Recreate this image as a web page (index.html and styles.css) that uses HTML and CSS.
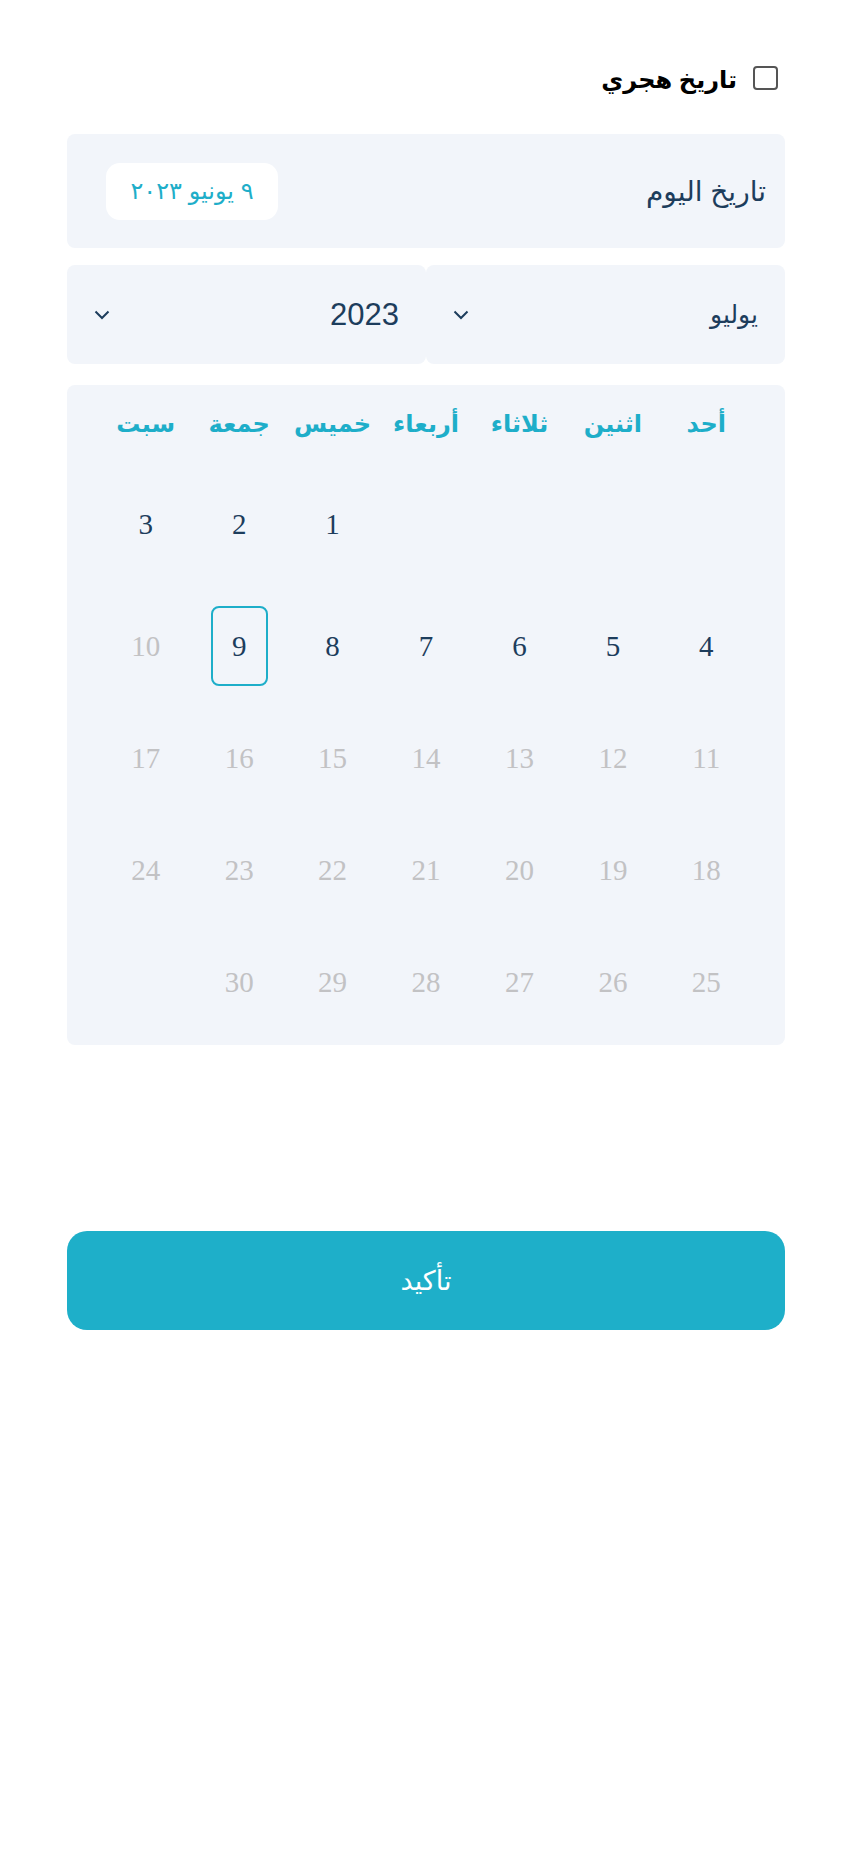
FILE: index.html
```html
<!DOCTYPE html>
<html lang="ar" dir="rtl">
<head>
<meta charset="utf-8">
<title>اختيار التاريخ</title>
<link rel="stylesheet" href="styles.css">
</head>
<body>
<div class="page">
  <label class="hijri">
    <span class="check"></span>
    <span class="hijri-text">تاريخ هجري</span>
  </label>

  <div class="today">
    <span class="today-title">تاريخ اليوم</span>
    <span class="today-chip">٩ يونيو ٢٠٢٣</span>
  </div>

  <div class="selects">
    <div class="select">
      <span class="select-text">يوليو</span>
      <svg class="chev" width="16" height="10" viewBox="0 0 16 10"><path d="M1.5 1.5 L8 8 L14.5 1.5" fill="none" stroke="#1d3d5c" stroke-width="2"/></svg>
    </div>
    <div class="select">
      <span class="select-text year">2023</span>
      <svg class="chev" width="16" height="10" viewBox="0 0 16 10"><path d="M1.5 1.5 L8 8 L14.5 1.5" fill="none" stroke="#1d3d5c" stroke-width="2"/></svg>
    </div>
  </div>

  <div class="calendar">
    <div class="weekdays">
      <span>أحد</span><span>اثنين</span><span>ثلاثاء</span><span>أربعاء</span><span>خميس</span><span>جمعة</span><span>سبت</span>
    </div>
    <div class="days">
      <div class="day"></div><div class="day"></div><div class="day"></div><div class="day"></div>
      <div class="day"><span>1</span></div><div class="day"><span>2</span></div><div class="day"><span>3</span></div>
      <div class="day"><span>4</span></div><div class="day"><span>5</span></div><div class="day"><span>6</span></div><div class="day"><span>7</span></div><div class="day"><span>8</span></div><div class="day"><span class="selected">9</span></div><div class="day muted"><span>10</span></div>
      <div class="day muted"><span>11</span></div><div class="day muted"><span>12</span></div><div class="day muted"><span>13</span></div><div class="day muted"><span>14</span></div><div class="day muted"><span>15</span></div><div class="day muted"><span>16</span></div><div class="day muted"><span>17</span></div>
      <div class="day muted"><span>18</span></div><div class="day muted"><span>19</span></div><div class="day muted"><span>20</span></div><div class="day muted"><span>21</span></div><div class="day muted"><span>22</span></div><div class="day muted"><span>23</span></div><div class="day muted"><span>24</span></div>
      <div class="day muted"><span>25</span></div><div class="day muted"><span>26</span></div><div class="day muted"><span>27</span></div><div class="day muted"><span>28</span></div><div class="day muted"><span>29</span></div><div class="day muted"><span>30</span></div><div class="day"></div>
    </div>
  </div>

  <button class="confirm">تأكيد</button>
</div>
</body>
</html>
```
FILE: styles.css
```css
* { box-sizing: border-box; }
html, body { margin: 0; padding: 0; background: #ffffff; }
body { font-family: "Liberation Sans", "DejaVu Sans", sans-serif; color: #1d3d5c; }

.page {
  direction: rtl;
  padding: 66px 67px 0 67px;
}

.hijri {
  display: flex;
  align-items: center;
  gap: 16px;
  height: 24px;
  padding-right: 7px;
}
.check {
  width: 25px;
  height: 24px;
  border: 2px solid #555555;
  border-radius: 4px;
  background: #fff;
}
.hijri-text {
  font-size: 24px;
  font-weight: bold;
  color: #000;
  line-height: 24px;
  margin-top: 4px;
}

.today {
  margin-top: 44px;
  height: 114px;
  background: #f2f5fa;
  border-radius: 8px;
  display: flex;
  align-items: center;
  justify-content: space-between;
  padding: 0 19px 0 39px;
}
.today-title {
  font-size: 28px;
  color: #1d3d5c;
}
.today-chip {
  width: 172px;
  height: 57px;
  background: #ffffff;
  border-radius: 14px;
  display: flex;
  align-items: center;
  justify-content: center;
  color: #1eaec9;
  font-size: 24px;
}

.selects {
  margin-top: 17px;
  display: flex;
  height: 99px;
}
.select {
  flex: 1;
  background: #f2f5fa;
  border-radius: 8px;
  display: flex;
  align-items: center;
  justify-content: space-between;
  padding: 0 27px;
}
.select-text {
  font-size: 25px;
  color: #1d3d5c;
}
.select-text.year {
  font-size: 31px;
}
.chev { display: block; }

.calendar {
  margin-top: 21px;
  background: #f2f5fa;
  border-radius: 8px;
  padding: 15px 32px 7px;
}
.weekdays {
  display: grid;
  grid-template-columns: repeat(7, 1fr);
  height: 48px;
  align-items: center;
  text-align: center;
  color: #1eaec9;
  font-weight: bold;
  font-size: 24px;
}
.days {
  margin-top: 20px;
  display: grid;
  grid-template-columns: repeat(7, 1fr);
  grid-template-rows: 112px 122px 112px 112px 112px;
  align-items: end;
  font-family: "Liberation Serif", "DejaVu Serif", serif;
  font-size: 29px;
  color: #1d3d5c;
}
.day {
  height: 112px;
  display: flex;
  align-items: center;
  justify-content: center;
}
.day.muted { color: #c2c2c4; }
.day .selected {
  width: 57px;
  height: 80px;
  border: 2px solid #1eaec9;
  border-radius: 8px;
  display: flex;
  align-items: center;
  justify-content: center;
}

.confirm {
  display: flex;
  align-items: center;
  justify-content: center;
  width: 100%;
  margin-top: 186px;
  height: 99px;
  border: none;
  border-radius: 20px;
  background: #1eafc9;
  color: #ffffff;
  font-family: "Liberation Sans", "DejaVu Sans", sans-serif;
  font-size: 27px;
  padding: 0;
}
```
